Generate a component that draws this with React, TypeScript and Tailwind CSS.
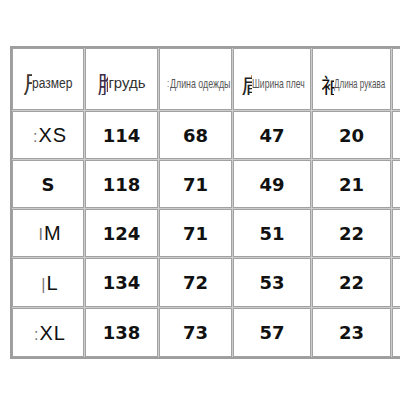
import React from 'react';

const SANS = "font-['Liberation_Sans','Noto_Sans_CJK_SC',sans-serif]";
const BOLD = "font-['DejaVu_Sans','Liberation_Sans',sans-serif] font-bold";

// cut-off CJK glyph that sits in front of the translated label
function Stub({ ch, w, cls = '' }: { ch: string; w: number; cls?: string }) {
  return (
    <span
      className={`inline-block overflow-hidden shrink-0 font-['Noto_Sans_CJK_SC',sans-serif] leading-none ${cls}`}
      style={{ width: w }}
    >
      {ch}
    </span>
  );
}

const rows = [
  { size: 'XS', stub: ':', bold: false, v: ['114', '68', '47', '20'] },
  { size: 'S', stub: '', bold: true, v: ['118', '71', '49', '21'] },
  { size: 'M', stub: 'I', bold: false, v: ['124', '71', '51', '22'] },
  { size: 'L', stub: '|', bold: false, v: ['134', '72', '53', '22'] },
  { size: 'XL', stub: ':', bold: false, v: ['138', '73', '57', '23'] },
];

const cell = 'bg-white border border-[#a2a2a2] flex items-center justify-center';
const head = `${cell} pt-[9px] ${SANS}`;

export default function App() {
  return (
    <div className="w-[400px] h-[400px] overflow-hidden bg-white pt-[46px] pl-[10px]">
      <div className="w-max border-2 border-[#9e9e9e] bg-[#cdcdcd] grid gap-px grid-cols-[72px_73px_73px_78px_79px_60px] grid-rows-[62px_48px_48px_48px_49px_49px]">
        {/* header */}
        <div className={head}>
          <Stub ch="尺" w={9} cls="text-[23px] text-[#3a3530]" />
          <span className="inline-block text-[14px] text-[#333] scale-x-[0.86] origin-left -mr-[6px]">размер</span>
        </div>
        <div className={head}>
          <Stub ch="胸" w={11} cls="text-[23px] text-[#3b2a4a]" />
          <span className="text-[15px] text-[#333]">грудь</span>
        </div>
        <div className={`${head} pl-2`}>
          <span className="text-[10px] text-[#888] mr-px">:</span>
          <span className="inline-block text-[13px] text-[#555] scale-x-[0.68] origin-left -mr-[27px] whitespace-nowrap">Длина одежды</span>
        </div>
        <div className={`${head} pl-1`}>
          <Stub ch="肩" w={10} cls="text-[22px] text-[#222]" />
          <span className="inline-block text-[13px] text-[#555] scale-x-[0.66] origin-left -mr-[25px] whitespace-nowrap">Ширина плеч</span>
        </div>
        <div className={`${head} pl-1`}>
          <Stub ch="袖" w={13} cls="text-[22px] text-[#111]" />
          <span className="inline-block text-[13px] text-[#555] scale-x-[0.62] origin-left -mr-[31px] whitespace-nowrap">Длина рукава</span>
        </div>
        <div className={cell} />

        {rows.map((r) => (
          <React.Fragment key={r.size}>
            <div className={cell}>
              {r.bold ? (
                <span className={`${BOLD} text-[18px] text-[#111]`}>{r.size}</span>
              ) : (
                <span className={`${SANS} text-[20px] text-[#111] tracking-[1px] pl-1`}>
                  <span className="text-[#777] text-[16px]">{r.stub}</span>
                  {r.size}
                </span>
              )}
            </div>
            {r.v.map((n, i) => (
              <div key={i} className={cell}>
                <span className={`${BOLD} text-[18px] text-[#111]`}>{n}</span>
              </div>
            ))}
            <div className={cell} />
          </React.Fragment>
        ))}
      </div>
    </div>
  );
}
